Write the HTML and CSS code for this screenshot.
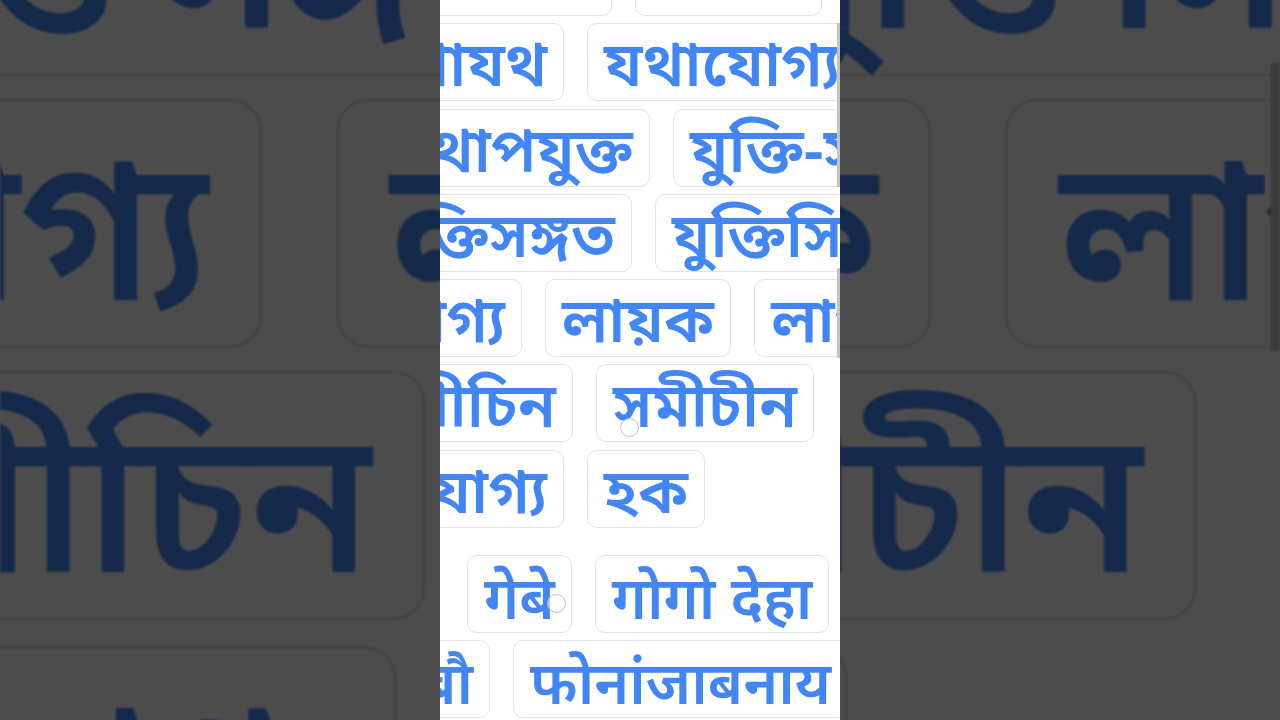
FILE: index.html
```html
<!DOCTYPE html>
<html lang="bn">
<head>
<meta charset="utf-8">
<title>সমার্থক শব্দ</title>
<link rel="stylesheet" href="styles.css">
</head>
<body>
<div class="stage">
  <div class="backdrop" aria-hidden="true">
    <div class="panel panel-copy">
      <div class="rows">
        <div class="row row0"><span class="chip lead">উচিত</span><span class="chip fixed">ঠিক</span></div>
        <div class="row row1"><span class="chip lead">যথাযথ</span><span class="chip">যথাযোগ্য</span></div>
        <div class="row row2"><span class="chip lead">যথোপযুক্ত</span><span class="chip">যুক্তি-সম্মত</span></div>
        <div class="row row3"><span class="chip lead">যুক্তিসঙ্গত</span><span class="chip">যুক্তিসিদ্ধ</span></div>
        <div class="row row4"><span class="chip lead">যোগ্য</span><span class="chip">লায়ক</span><span class="chip">লাগসই</span></div>
        <div class="row row5"><span class="chip lead">সমীচিন</span><span class="chip">সমীচীন</span></div>
        <div class="row row6"><span class="chip lead">সুযোগ্য</span><span class="chip">হক</span></div>
        <div class="row row7 deva"><span class="chip">गेबे</span><span class="chip">गोगो देहा</span></div>
        <div class="row row8 deva"><span class="chip lead">जोबौ</span><span class="chip">फोनांजाबनाय</span></div>
      </div>
      <span class="bar bar-a"></span><span class="bar bar-b"></span>
      <span class="touch touch-a"></span><span class="touch touch-b"></span>
    </div>
  </div>

  <div class="panel">
    <div class="rows">
      <div class="row row0"><span class="chip lead">উচিত</span><span class="chip fixed">ঠিক</span></div>
      <div class="row row1"><span class="chip lead">যথাযথ</span><span class="chip">যথাযোগ্য</span></div>
      <div class="row row2"><span class="chip lead">যথোপযুক্ত</span><span class="chip">যুক্তি-সম্মত</span></div>
      <div class="row row3"><span class="chip lead">যুক্তিসঙ্গত</span><span class="chip">যুক্তিসিদ্ধ</span></div>
      <div class="row row4"><span class="chip lead">যোগ্য</span><span class="chip">লায়ক</span><span class="chip">লাগসই</span></div>
      <div class="row row5"><span class="chip lead">সমীচিন</span><span class="chip">সমীচীন</span></div>
      <div class="row row6"><span class="chip lead">সুযোগ্য</span><span class="chip">হক</span></div>
      <div class="row row7 deva"><span class="chip">गेबे</span><span class="chip">गोगो देहा</span></div>
      <div class="row row8 deva"><span class="chip lead">जोबौ</span><span class="chip">फोनांजाबनाय</span></div>
    </div>
    <span class="bar bar-a"></span><span class="bar bar-b"></span>
    <span class="touch touch-a"></span><span class="touch touch-b"></span>
  </div>
</div>
</body>
</html>
```

FILE: styles.css
```css
* { box-sizing: border-box; }
html, body { margin: 0; padding: 0; }
body {
  width: 1280px;
  height: 720px;
  overflow: hidden;
  background: #4f4f4f;
  font-family: "Noto Sans Bengali", "Noto Sans Devanagari", "Noto Sans", "Lohit Bengali", "FreeSans", sans-serif;
}
.stage {
  position: relative;
  width: 1280px;
  height: 720px;
  overflow: hidden;
  display: flex;
  justify-content: center;
  background: #4f4f4f;
}
.backdrop {
  position: absolute;
  inset: 0;
  display: flex;
  justify-content: center;
  overflow: hidden;
}
.panel {
  position: relative;
  width: 400px;
  height: 720px;
  background: #ffffff;
  overflow: hidden;
  flex: none;
}
.panel-copy {
  transform: scale(3.2);
  transform-origin: 200px 361px;
  filter: brightness(0.3) blur(0.35px);
}
.rows {
  display: flex;
  flex-direction: column;
  gap: 7.3px;
  margin-top: -62px;
}
.row {
  display: flex;
  gap: 23px;
  height: 78px;
  flex: none;
}
.chip {
  flex: none;
  height: 78px;
  display: flex;
  align-items: center;
  justify-content: center;
  padding: 16px 16px 0;
  border: 1.5px solid #dce6e6;
  border-radius: 10px;
  background: #ffffff;
  color: #4285f4;
  font-size: 62px;
  font-weight: 600;
  white-space: nowrap;
  line-height: 1;
}
.lead {
  justify-content: flex-end;
  margin-left: -200px;
}
.fixed { width: 187px; }
.row0 .chip { padding: 0 16px 30px; }
.row0 .lead { width: 372px; }
.row1 .lead { width: 324px; }
.row2 .lead { width: 410px; }
.row3 .lead { width: 392px; }
.row4 .lead { width: 282px; }
.row5 .lead { width: 333px; }
.row6 .lead { width: 324px; }
.row7 { margin-top: 20px; padding-left: 27px; }
.row8 .lead { width: 250px; }
.deva .chip {
  font-family: "Noto Sans Devanagari", "Noto Sans", "Lohit Devanagari", "FreeSans", sans-serif;
  font-size: 59px;
  padding-top: 20px;
}

.bar {
  position: absolute;
  right: 0;
  width: 3px;
  background: #c4c4c4;
}
.bar-a { top: 23px; height: 164px; }
.bar-b { top: 268px; height: 90px; }

.touch {
  position: absolute;
  width: 19px;
  height: 19px;
  border-radius: 50%;
  border: 1px solid #b9bfc8;
  background: rgba(255, 255, 255, 0.55);
}
.touch-a { left: 180px; top: 418px; }
.touch-b { left: 107px; top: 594px; }
```
